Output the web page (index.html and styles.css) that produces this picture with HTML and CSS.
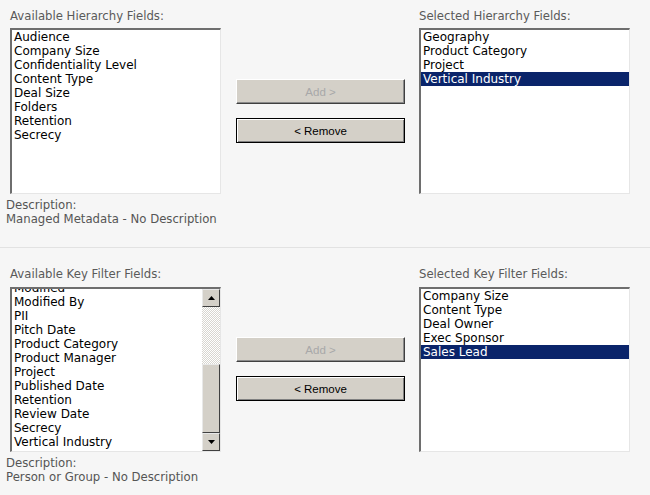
FILE: index.html
```html
<!DOCTYPE html>
<html lang="en">
<head>
  <meta charset="UTF-8">
  <title>Hierarchy and Key Filter Fields</title>
  <link rel="stylesheet" href="styles.css">
</head>
<body>

  <div class="section section-top">
    <div class="picker">
      <div class="col">
        <div class="field-label">Available Hierarchy Fields:</div>
        <div class="listbox">
          <div class="items">
            <div class="item">Audience</div>
            <div class="item">Company Size</div>
            <div class="item">Confidentiality Level</div>
            <div class="item">Content Type</div>
            <div class="item">Deal Size</div>
            <div class="item">Folders</div>
            <div class="item">Retention</div>
            <div class="item">Secrecy</div>
          </div>
        </div>
      </div>

      <div class="actions">
        <button class="btn" disabled>Add &gt;</button>
        <button class="btn btn-default">&lt; Remove</button>
      </div>

      <div class="col">
        <div class="field-label">Selected Hierarchy Fields:</div>
        <div class="listbox">
          <div class="items">
            <div class="item">Geography</div>
            <div class="item">Product Category</div>
            <div class="item">Project</div>
            <div class="item selected">Vertical Industry</div>
          </div>
        </div>
      </div>
    </div>
    <div class="description">
      Description:<br>
      Managed Metadata - No Description
    </div>
  </div>

  <div class="section section-bottom">
    <div class="picker">
      <div class="col">
        <div class="field-label">Available Key Filter Fields:</div>
        <div class="listbox with-scroll">
          <div class="items scrolled">
            <div class="item">Modified</div>
            <div class="item">Modified By</div>
            <div class="item">PII</div>
            <div class="item">Pitch Date</div>
            <div class="item">Product Category</div>
            <div class="item">Product Manager</div>
            <div class="item">Project</div>
            <div class="item">Published Date</div>
            <div class="item">Retention</div>
            <div class="item">Review Date</div>
            <div class="item">Secrecy</div>
            <div class="item">Vertical Industry</div>
          </div>
          <div class="scrollbar">
            <div class="sb-btn">
              <svg width="7" height="4" viewBox="0 0 7 4"><polygon points="0,4 7,4 3.5,0" fill="#000"/></svg>
            </div>
            <div class="sb-track">
              <div class="sb-thumb"></div>
            </div>
            <div class="sb-btn">
              <svg width="7" height="4" viewBox="0 0 7 4"><polygon points="0,0 7,0 3.5,4" fill="#000"/></svg>
            </div>
          </div>
        </div>
      </div>

      <div class="actions">
        <button class="btn" disabled>Add &gt;</button>
        <button class="btn btn-default">&lt; Remove</button>
      </div>

      <div class="col">
        <div class="field-label">Selected Key Filter Fields:</div>
        <div class="listbox">
          <div class="items">
            <div class="item">Company Size</div>
            <div class="item">Content Type</div>
            <div class="item">Deal Owner</div>
            <div class="item">Exec Sponsor</div>
            <div class="item selected">Sales Lead</div>
          </div>
        </div>
      </div>
    </div>
    <div class="description">
      Description:<br>
      Person or Group - No Description
    </div>
  </div>

</body>
</html>
```

FILE: styles.css
```css
body {
  margin: 0;
  background: #f6f6f6;
  font-family: "DejaVu Sans", Verdana, sans-serif;
  font-size: 11.7px;
  color: #000;
}

.section {
  padding: 9px 0 21px 0;
}

.section-top {
  border-bottom: 1px solid #e2e2e2;
}

.section-bottom {
  padding-top: 19px;
  padding-bottom: 0;
}

.picker {
  display: flex;
  padding-left: 10px;
}

.col {
  width: 211px;
}

.field-label {
  color: #5a5a5a;
  line-height: 14px;
  margin-bottom: 5px;
}

.section-bottom .field-label {
  margin-bottom: 6px;
}

.listbox {
  height: 163px;
  background: #fff;
  border-style: solid;
  border-width: 2px 1px 1px 2px;
  border-color: #6e6e6e #e6e6e6 #e6e6e6 #6e6e6e;
  overflow: hidden;
  display: flex;
}

.section-bottom .listbox {
  height: 162px;
}

.items {
  flex: 1;
  font-size: 12px;
}

.items.scrolled {
  margin-top: -8px;
}

.item {
  height: 14px;
  line-height: 15px;
  padding-left: 2px;
  white-space: nowrap;
}

.item.selected {
  background: #0a246a;
  color: #fff;
}

.actions {
  width: 169px;
  margin: 0 14px 0 15px;
  padding-top: 70px;
  display: flex;
  flex-direction: column;
  gap: 14px;
}

.btn {
  height: 25px;
  background: #d4d0c8;
  font-family: "Liberation Sans", Arial, sans-serif;
  font-size: 11.5px;
  color: #000;
  border: 1px solid;
  border-color: #ffffff #404040 #404040 #ffffff;
  box-shadow: inset -1px -1px 0 #8a8a8a;
  padding: 0;
}

.btn:disabled {
  color: #a8a8a8;
}

.btn-default {
  border-color: #000;
  box-shadow: inset 1px 1px 0 #fff, inset -1px -1px 0 #808080;
}

.scrollbar {
  width: 18px;
  display: flex;
  flex-direction: column;
}

.sb-btn {
  height: 16px;
  background: #d4d0c8;
  border: 1px solid;
  border-color: #e8e8e8 #404040 #404040 #e8e8e8;
  display: flex;
  align-items: center;
  justify-content: center;
}

.sb-track {
  flex: 1;
  display: flex;
  flex-direction: column;
  justify-content: flex-end;
  background: repeating-conic-gradient(#ffffff 0 25%, #d8d6d0 0 50%) 0 0 / 2px 2px;
}

.sb-thumb {
  height: 67px;
  background: #d4d0c8;
  border: 1px solid;
  border-color: #e8e8e8 #404040 #404040 #e8e8e8;
}

.description {
  margin-top: 4px;
  padding-left: 6px;
  color: #555;
  line-height: 14px;
}
```
